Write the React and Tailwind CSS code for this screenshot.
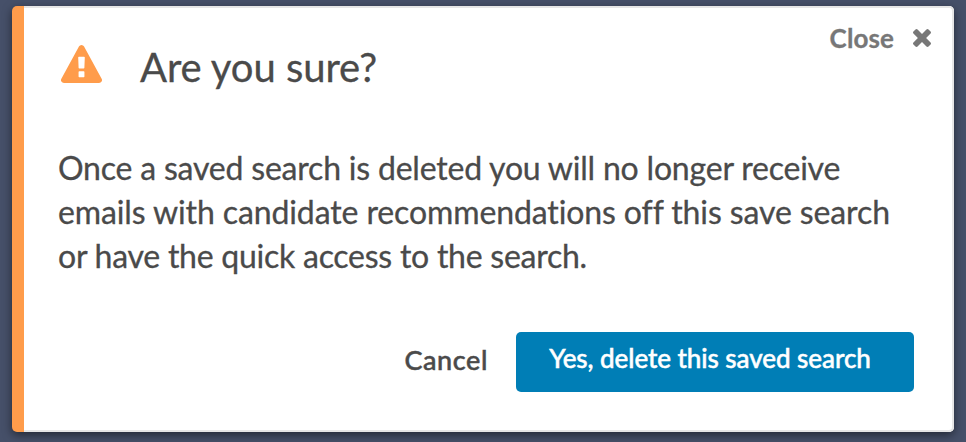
function WarningIcon({ className }) {
  return (
    <svg className={className} viewBox="0 0 1792 1664" fill="currentColor" preserveAspectRatio="none">
      <path d="M1024 1375v-190q0-14-9.5-23.5t-22.5-9.5h-192q-13 0-22.5 9.5t-9.5 23.5v190q0 14 9.5 23.5t22.5 9.5h192q13 0 22.5-9.5t9.5-23.5zm-2-374l18-459q0-12-10-19-13-11-24-11h-220q-11 0-24 11-10 7-10 21l17 457q0 10 10 16.5t24 6.5h185q14 0 23.5-6.5t10.5-16.5zm-14-934l768 1408q35 63-2 126-17 29-46.5 46t-63.5 17h-1536q-34 0-63.5-17t-46.5-46q-37-63-2-126l768-1408q17-31 47-49t65-18 65 18 47 49z" />
    </svg>
  );
}

function CloseIcon({ className }) {
  return (
    <svg className={className} viewBox="302 366 1188 1188" fill="currentColor">
      <path d="M1490 1322q0 40-28 68l-136 136q-28 28-68 28t-68-28l-294-294-294 294q-28 28-68 28t-68-28l-136-136q-28-28-28-68t28-68l294-294-294-294q-28-28-28-68t28-68l136-136q28-28 68-28t68 28l294 294 294-294q28-28 68-28t68 28l136 136q28 28 28 68t-28 68l-294 294 294 294q28 28 28 68z" />
    </svg>
  );
}

export default function App() {
  return (
    <div className="flex h-[442px] w-[966px] overflow-hidden bg-[#465069] pt-[6px] pl-3 font-['Lato',sans-serif] text-[#4a4a4a]">
      {/* Dialog */}
      <div className="flex h-[426px] w-[942px] flex-col rounded-[5px] border-l-[12px] border-[#ff9c4b] bg-white shadow-[0_3px_10px_rgba(0,0,0,0.5),inset_-2px_0_#e6e6e6,inset_0_2px_#e6e6e6,inset_0_-2px_#e6e6e6]">
        <div className="flex h-[100px] justify-between">
          <div className="flex pt-[37px] pl-[37px]">
            <WarningIcon className="mt-[2px] h-[38px] w-[41px] text-[#ff9c4b]" />
            <h1 className="ml-[38px] text-[40px] leading-[48px] tracking-[-0.06px] [-webkit-text-stroke:0.3px]">Are you sure?</h1>
          </div>
          <button className="mt-4 flex h-8 items-center gap-[19px] pr-[23px] text-[26px] font-bold text-[#777]">
            <span className="tracking-[0.1px] [-webkit-text-stroke:0.3px]">Close</span>
            <CloseIcon className="mb-px h-[18px] w-[18px]" />
          </button>
        </div>
        <p className="mt-[40px] pl-[34px] text-[32px] leading-[44px] tracking-[-0.2px] whitespace-nowrap [-webkit-text-stroke:0.3px]">
          Once a saved search is deleted you will no longer receive
          <br />
          <span className="tracking-[-0.11px]">emails with candidate recommendations off this save search</span>
          <br />
          <span className="tracking-[-0.25px]">or have the quick access to the search.</span>
        </p>
        <div className="mt-[54px] flex items-center justify-end gap-[28px] pr-[40px]">
          <button className="pb-[4px] text-[27px] font-medium tracking-[0.6px] [-webkit-text-stroke:0.5px]">Cancel</button>
          <button className="h-[60px] w-[398px] rounded-[5px] bg-[#007eb6] pr-[10px] pb-[8px] text-[26px] font-medium tracking-[-0.06px] text-white [-webkit-text-stroke:0.5px]">
            Yes, delete this saved search
          </button>
        </div>
      </div>
    </div>
  );
}
